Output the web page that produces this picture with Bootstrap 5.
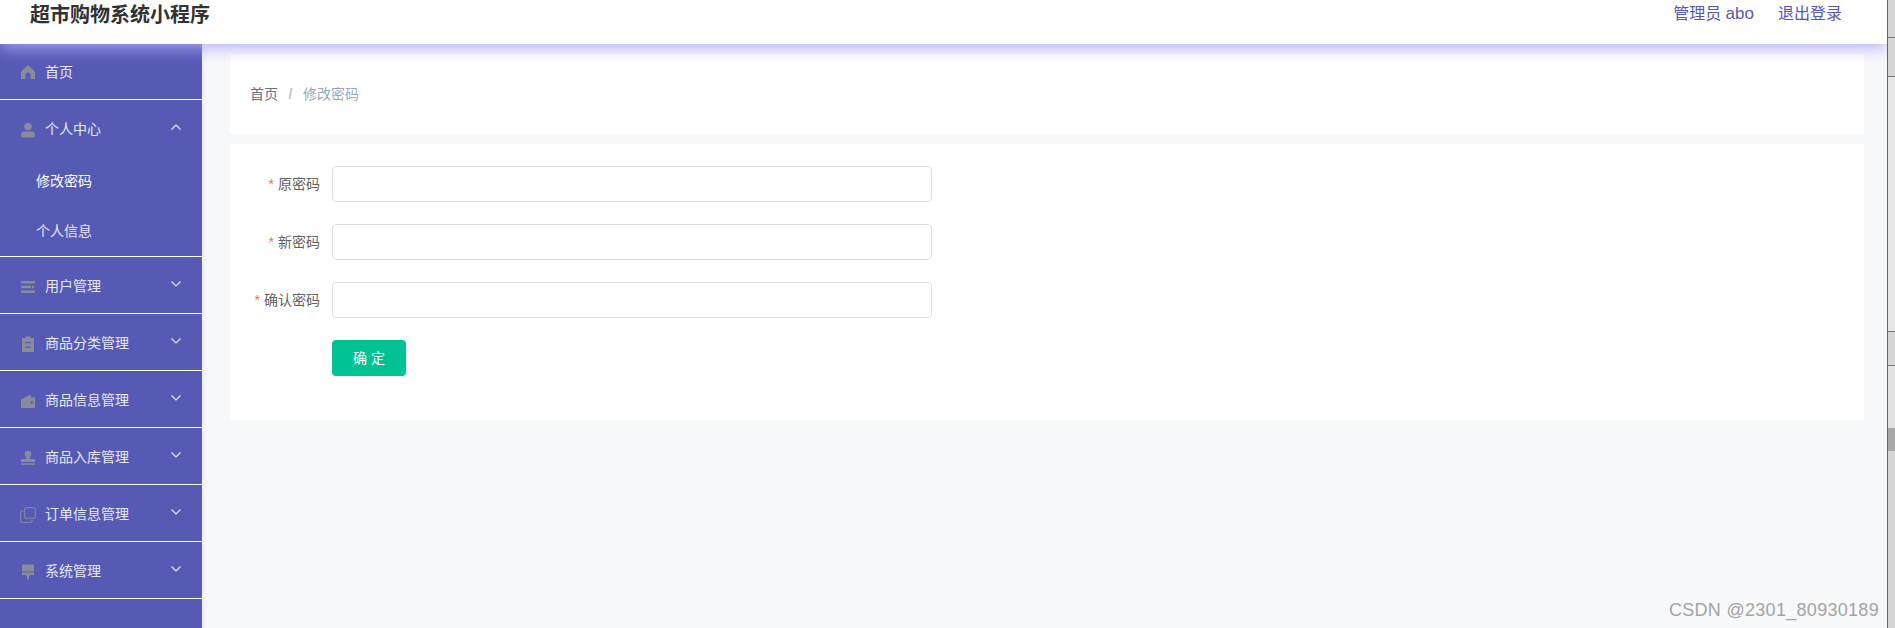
<!DOCTYPE html>
<html lang="zh">
<head>
  <meta charset="UTF-8" />
  <title>超市购物系统小程序</title>
  <link href="https://cdn.jsdelivr.net/npm/bootstrap@5.3.3/dist/css/bootstrap.min.css" rel="stylesheet" />
  <style>
    html, body {
      height: 100%;
      overflow: hidden;
    }
    body {
      font-family: "Liberation Sans", "Noto Sans CJK SC", sans-serif;
      background-color: #f7f8fa;
      font-size: 14px;
      color: #606266;
    }
    .app-frame {
      height: 628px;
      position: relative;
    }
    .app-main {
      width: 1887px;
      overflow: hidden;
    }
    .side-strip {
      width: 8px;
      background: #d6d6d6;
      border-left: 1px solid #666;
    }
    .strip-part {
      border-bottom: 1px solid #777;
    }
    .strip-a { height: 38px; }
    .strip-b { height: 39px; }
    .strip-c { height: 255px; background: #e6e6e6; }
    .strip-d { height: 34px; }
    .strip-e { height: 62px; background: #e2e2e2; border-bottom: 0; }
    .strip-f { height: 23px; background: #a8a8a8; border-bottom: 0; }
    .top-bar {
      height: 44px;
      background: #fff;
      padding: 0 45px 0 30px;
      box-shadow: 0 4px 16px rgba(171, 171, 247, .9);
      position: relative;
      z-index: 2;
    }
    .top-title {
      font-size: 20px;
      font-weight: 700;
      color: #303133;
      line-height: 30px;
    }
    .top-link {
      font-size: 16px;
      line-height: 28px;
      color: #5558b8;
      text-decoration: none;
    }
    .top-name {
      font-size: 17px;
    }
    .body-row {
      height: 584px;
    }
    .side-menu {
      width: 202px;
      flex-shrink: 0;
      background: #575ab5;
      color: #e6e8f2;
    }
    .menu-head {
      height: 57px;
      padding: 2px 21px 0 20px;
      border-bottom: 1px solid #fff;
      gap: 9px;
      line-height: 1;
    }
    .menu-first {
      height: 56px;
      padding-top: 0;
    }
    .menu-open {
      border-bottom: 0;
      height: 56px;
    }
    .menu-sub {
      height: 50px;
      padding-left: 36px;
    }
    .menu-sub-last {
      height: 51px;
      padding-top: 1px;
      border-bottom: 1px solid #fff;
    }
    .menu-icon {
      width: 16px;
      height: 16px;
      margin-top: 1px;
      fill: #8a8b9a;
      flex-shrink: 0;
    }
    .menu-arrow {
      width: 10px;
      height: 6px;
      margin-bottom: 5px;
      stroke: #e6e8f2;
      fill: none;
      stroke-width: 1.2;
    }
    .main-pane {
      border-left: 4px solid #f1f2f6;
      padding: 10px 23px 0 24px;
    }
    .crumb-box {
      height: 80px;
      background: #fff;
      padding-left: 20px;
      margin-bottom: 10px;
      color: #6a7080;
    }
    .crumb-sep {
      margin: 0 10.5px;
      font-weight: 700;
      color: #c0c4cc;
    }
    .crumb-now {
      color: #97a8be;
    }
    .form-box {
      height: 276px;
      background: #fff;
      padding-top: 22px;
    }
    .field-row {
      height: 36px;
      margin-bottom: 22px;
    }
    .field-label {
      width: 102px;
      padding-right: 12px;
      text-align: right;
    }
    .field-star {
      color: #f56c6c;
      margin-right: 4px;
    }
    .field-input {
      width: 600px;
      height: 36px;
      border: 1px solid #dcdfe6;
      border-radius: 4px;
    }
    .save-btn {
      width: 74px;
      height: 36px;
      margin-left: 102px;
      padding: 0;
      font-size: 14px;
      color: #fff;
      background: #00c292;
      border: 0;
      border-radius: 4px;
      display: block;
    }
    .mark-text {
      position: absolute;
      right: 16px;
      top: 599px;
      font-size: 18px;
      line-height: 22px;
      letter-spacing: .3px;
      color: #a4a4a4;
    }
  </style>
</head>
<body>
  <div class="app-frame d-flex">
    <div class="app-main">
      <div class="top-bar d-flex justify-content-between">
        <div class="top-title">超市购物系统小程序</div>
        <div class="d-flex gap-4">
          <a class="top-link" href="#">管理员 <span class="top-name">abo</span></a>
          <a class="top-link" href="#">退出登录</a>
        </div>
      </div>

      <div class="body-row d-flex">
        <!-- 左侧菜单 -->
        <div class="side-menu">
          <div class="menu-head menu-first d-flex align-items-center">
            <svg class="menu-icon" viewBox="0 0 16 16"><path d="M8 1 1 7.500V15h4.500v-4a2.500 2.500 0 0 1 5 0v4H15V7.500z"/></svg>
            <span>首页</span>
          </div>
          <div class="menu-head menu-open d-flex align-items-center">
            <svg class="menu-icon" viewBox="0 0 16 16"><circle cx="8" cy="4.500" r="3.800"/><path d="M1 13c0-2.500 1.500-3.500 3.500-3.500h7C13.500 9.500 15 10.500 15 13c0 1.500-.7 2.500-2 2.500H3c-1.300 0-2-1-2-2.500z"/></svg>
            <span class="flex-grow-1">个人中心</span>
            <svg class="menu-arrow" viewBox="0 0 10 6"><path d="M.5 5.500 5 1l4.500 4.500"/></svg>
          </div>
          <div class="menu-sub d-flex align-items-center text-white">修改密码</div>
          <div class="menu-sub menu-sub-last d-flex align-items-center">个人信息</div>
          <div class="menu-head d-flex align-items-center">
            <svg class="menu-icon" viewBox="0 0 16 16"><path d="M1 2h14v2.500H1zM1 6.800h10v2.500H1zM12 6.300l3 1.700-3 1.800zM1 11.500h14V14H1z"/></svg>
            <span class="flex-grow-1">用户管理</span>
            <svg class="menu-arrow" viewBox="0 0 10 6"><path d="M.5.500 5 5l4.500-4.500"/></svg>
          </div>
          <div class="menu-head d-flex align-items-center">
            <svg class="menu-icon" viewBox="0 0 16 16"><path fill-rule="evenodd" d="M2 2h3.500V.500h5V2H14v14H2zM5 6v1.300h6V6zm0 4.500v1.300h6v-1.300z"/></svg>
            <span class="flex-grow-1">商品分类管理</span>
            <svg class="menu-arrow" viewBox="0 0 10 6"><path d="M.5.500 5 5l4.500-4.500"/></svg>
          </div>
          <div class="menu-head d-flex align-items-center">
            <svg class="menu-icon" viewBox="0 0 16 16"><path fill-rule="evenodd" d="M1 6.500 10.500 1.500l1 3H15V15H1zM10.500 9.500a1.200 1.200 0 1 0 2.400 0 1.200 1.200 0 0 0-2.400 0z"/></svg>
            <span class="flex-grow-1">商品信息管理</span>
            <svg class="menu-arrow" viewBox="0 0 10 6"><path d="M.5.500 5 5l4.500-4.500"/></svg>
          </div>
          <div class="menu-head d-flex align-items-center">
            <svg class="menu-icon" viewBox="0 0 16 16"><circle cx="8" cy="4" r="3.300"/><path d="M6.300 6h3.400l.5 3H15v3H1V9h4.800zM1 13.300h14v1.400H1z"/></svg>
            <span class="flex-grow-1">商品入库管理</span>
            <svg class="menu-arrow" viewBox="0 0 10 6"><path d="M.5.500 5 5l4.500-4.500"/></svg>
          </div>
          <div class="menu-head d-flex align-items-center">
            <svg class="menu-icon" viewBox="0 0 16 16"><path fill="none" stroke="#7f80a8" stroke-width="1.200" d="M6.500.6h7a1.900 1.900 0 0 1 1.900 1.900v7a1.900 1.900 0 0 1-1.900 1.900h-7a1.900 1.900 0 0 1-1.900-1.900v-7A1.900 1.900 0 0 1 6.500.6zM3.500 4H2.500A1.900 1.900 0 0 0 .6 5.900v7.600a1.900 1.900 0 0 0 1.900 1.900h7.600a1.900 1.900 0 0 0 1.900-1.900v-.9"/></svg>
            <span class="flex-grow-1">订单信息管理</span>
            <svg class="menu-arrow" viewBox="0 0 10 6"><path d="M.5.500 5 5l4.500-4.500"/></svg>
          </div>
          <div class="menu-head d-flex align-items-center">
            <svg class="menu-icon" viewBox="0 0 16 16"><path d="M2 .5h12v7H2zM2 8.500h12V11h-4l-1 1v3.500H7V12l-1-1H2z"/></svg>
            <span class="flex-grow-1">系统管理</span>
            <svg class="menu-arrow" viewBox="0 0 10 6"><path d="M.5.500 5 5l4.500-4.500"/></svg>
          </div>
        </div>

        <!-- 内容 -->
        <div class="main-pane flex-grow-1">
          <div class="crumb-box d-flex align-items-center">
            <span>首页</span><span class="crumb-sep">/</span><span class="crumb-now">修改密码</span>
          </div>
          <div class="form-box">
            <div class="field-row d-flex align-items-center">
              <label class="field-label"><span class="field-star">*</span>原密码</label>
              <input class="field-input" type="password" />
            </div>
            <div class="field-row d-flex align-items-center">
              <label class="field-label"><span class="field-star">*</span>新密码</label>
              <input class="field-input" type="password" />
            </div>
            <div class="field-row d-flex align-items-center">
              <label class="field-label"><span class="field-star">*</span>确认密码</label>
              <input class="field-input" type="password" />
            </div>
            <button class="save-btn" type="button">确 定</button>
          </div>
        </div>
      </div>
    </div>

    <div class="side-strip flex-shrink-0">
      <div class="strip-part strip-a"></div>
      <div class="strip-part strip-b"></div>
      <div class="strip-part strip-c"></div>
      <div class="strip-part strip-d"></div>
      <div class="strip-part strip-e"></div>
      <div class="strip-part strip-f"></div>
    </div>

    <div class="mark-text">CSDN @2301_80930189</div>
  </div>
  <script src="https://cdn.jsdelivr.net/npm/bootstrap@5.3.3/dist/js/bootstrap.bundle.min.js"></script>
</body>
</html>
